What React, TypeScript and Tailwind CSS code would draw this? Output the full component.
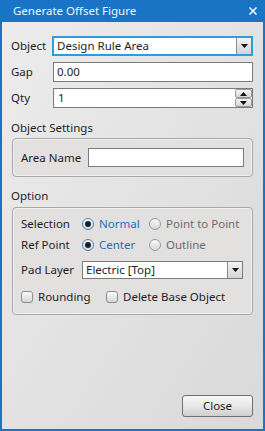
import React from 'react';

const font = "font-['Noto_Sans','Liberation_Sans',sans-serif]";

function Arrow({ up = false }: { up?: boolean }) {
  return (
    <svg width="7" height="4" viewBox="0 0 7 4" className={up ? 'rotate-180' : ''}>
      <path d="M0 0 H7 L3.5 4 Z" fill="#111" />
    </svg>
  );
}

function DropButton() {
  return (
    <div className="w-[15px] self-stretch flex items-center justify-center border-l border-[#8c8c8c] bg-gradient-to-b from-[#f4f4f4] to-[#d4d4d4]">
      <Arrow />
    </div>
  );
}

function Radio({ checked }: { checked: boolean }) {
  return (
    <span
      className={`w-[12px] h-[12px] rounded-full border flex items-center justify-center bg-gradient-to-b from-[#fafafa] to-[#d8d8d8] ${
        checked ? 'border-[#3d86c6]' : 'border-[#9a9a9a]'
      }`}
    >
      {checked && <span className="w-[6px] h-[6px] rounded-full bg-[#1f1f1f]" />}
    </span>
  );
}

function Check() {
  return (
    <span className="w-[12px] h-[12px] rounded-[3px] border border-[#8e8e8e] bg-gradient-to-b from-[#fbfbfb] to-[#d6d6d6]" />
  );
}

export default function App() {
  return (
    <div className={`w-[265px] h-[431px] flex flex-col text-[11.5px] text-[#1e1e1e] ${font}`}>
      {/* Title bar */}
      <div className="h-[22px] bg-[#1a74c6] flex items-center justify-between pl-[13px] pr-[8px]">
        <span className="text-[#eef4fb] text-[11.5px] leading-none">Generate Offset Figure</span>
        <svg width="8" height="8" viewBox="0 0 8 8">
          <path d="M0.5 0.5 L7.5 7.5 M7.5 0.5 L0.5 7.5" stroke="#fff" strokeWidth="1.5" />
        </svg>
      </div>

      {/* Body */}
      <div className="flex-1 flex flex-col border-x-2 border-b-2 border-[#1a74c6] bg-gradient-to-br from-[#ececec] to-[#d9d9d9] px-[10px] pt-[14px] pb-[12px]">
        <div className="flex items-center h-[20px]">
          <span className="w-[42px] -ml-px">Object</span>
          <div className="flex-1 h-[20px] flex items-stretch border-2 border-[#2a9fe0] bg-white -ml-px">
            <span className="flex-1 flex items-center pl-[3px]">Design Rule Area</span>
            <DropButton />
          </div>
        </div>

        <div className="flex items-center h-[20px] mt-[6px]">
          <span className="w-[42px] -ml-px">Gap</span>
          <div className="flex-1 h-[20px] flex items-center border border-[#7b7b7b] bg-white pl-[3px]">0.00</div>
        </div>

        <div className="flex items-center h-[20px] mt-[6px]">
          <span className="w-[42px] -ml-px">Qty</span>
          <div className="flex-1 h-[20px] flex items-stretch border border-[#7b7b7b] bg-white">
            <span className="flex-1 flex items-center pl-[4px]">1</span>
            <div className="w-[17px] flex flex-col">
              <div className="flex-1 flex items-center justify-center border border-[#9a9a9a] rounded-[2px] bg-gradient-to-b from-[#f6f6f6] to-[#d6d6d6]">
                <Arrow up />
              </div>
              <div className="flex-1 flex items-center justify-center border border-[#9a9a9a] rounded-[2px] bg-gradient-to-b from-[#f6f6f6] to-[#d6d6d6]">
                <Arrow />
              </div>
            </div>
          </div>
        </div>

        {/* Object Settings */}
        <div className="mt-[12px] h-[16px] leading-[16px] -ml-px">Object Settings</div>
        <div className="mt-[2px] h-[39px] rounded-[4px] border border-[#a8a8a8] bg-[#e3e0e0] shadow-[inset_0_0_0_1px_rgba(255,255,255,0.5)] flex items-center pl-[8px] pr-[8px]">
          <span className="w-[67px]">Area Name</span>
          <div className="flex-1 h-[19px] border border-[#7b7b7b] bg-white" />
        </div>

        {/* Option */}
        <div className="mt-[11px] h-[16px] leading-[16px] -ml-px">Option</div>
        <div className="mt-[3px] h-[108px] rounded-[4px] border border-[#a8a8a8] bg-[#e3e0e0] shadow-[inset_0_0_0_1px_rgba(255,255,255,0.5)] flex flex-col pl-[8px] pr-[9px] pt-[8px]">
          <div className="flex items-center h-[16px]">
            <span className="w-[61px]">Selection</span>
            <span className="w-[67px] flex items-center gap-[5px]">
              <Radio checked />
              <span className="text-[#1f6fbf]">Normal</span>
            </span>
            <span className="flex items-center gap-[5px]">
              <Radio checked={false} />
              <span className="text-[#6c6c6c]">Point to Point</span>
            </span>
          </div>
          <div className="flex items-center h-[16px] mt-[5px]">
            <span className="w-[61px]">Ref Point</span>
            <span className="w-[67px] flex items-center gap-[5px]">
              <Radio checked />
              <span className="text-[#1f6fbf]">Center</span>
            </span>
            <span className="flex items-center gap-[5px]">
              <Radio checked={false} />
              <span className="text-[#6c6c6c]">Outline</span>
            </span>
          </div>
          <div className="flex items-center h-[18px] mt-[8px]">
            <span className="w-[61px]">Pad Layer</span>
            <div className="flex-1 h-[18px] flex items-stretch border border-[#7b7b7b] bg-white">
              <span className="flex-1 flex items-center pl-[3px]">Electric [Top]</span>
              <DropButton />
            </div>
          </div>
          <div className="flex items-center h-[16px] mt-[10px]">
            <span className="w-[85px] flex items-center gap-[5px]">
              <Check />
              <span>Rounding</span>
            </span>
            <span className="flex items-center gap-[5px]">
              <Check />
              <span>Delete Base Object</span>
            </span>
          </div>
        </div>

        <div className="mt-auto flex justify-end">
          <button className="w-[71px] h-[22px] rounded-[3px] border border-[#707070] bg-gradient-to-b from-[#f7f7f7] via-[#e8e8e8] to-[#cfcfcf] text-[11.5px] leading-none text-[#1e1e1e]">
            Close
          </button>
        </div>
      </div>
    </div>
  );
}
